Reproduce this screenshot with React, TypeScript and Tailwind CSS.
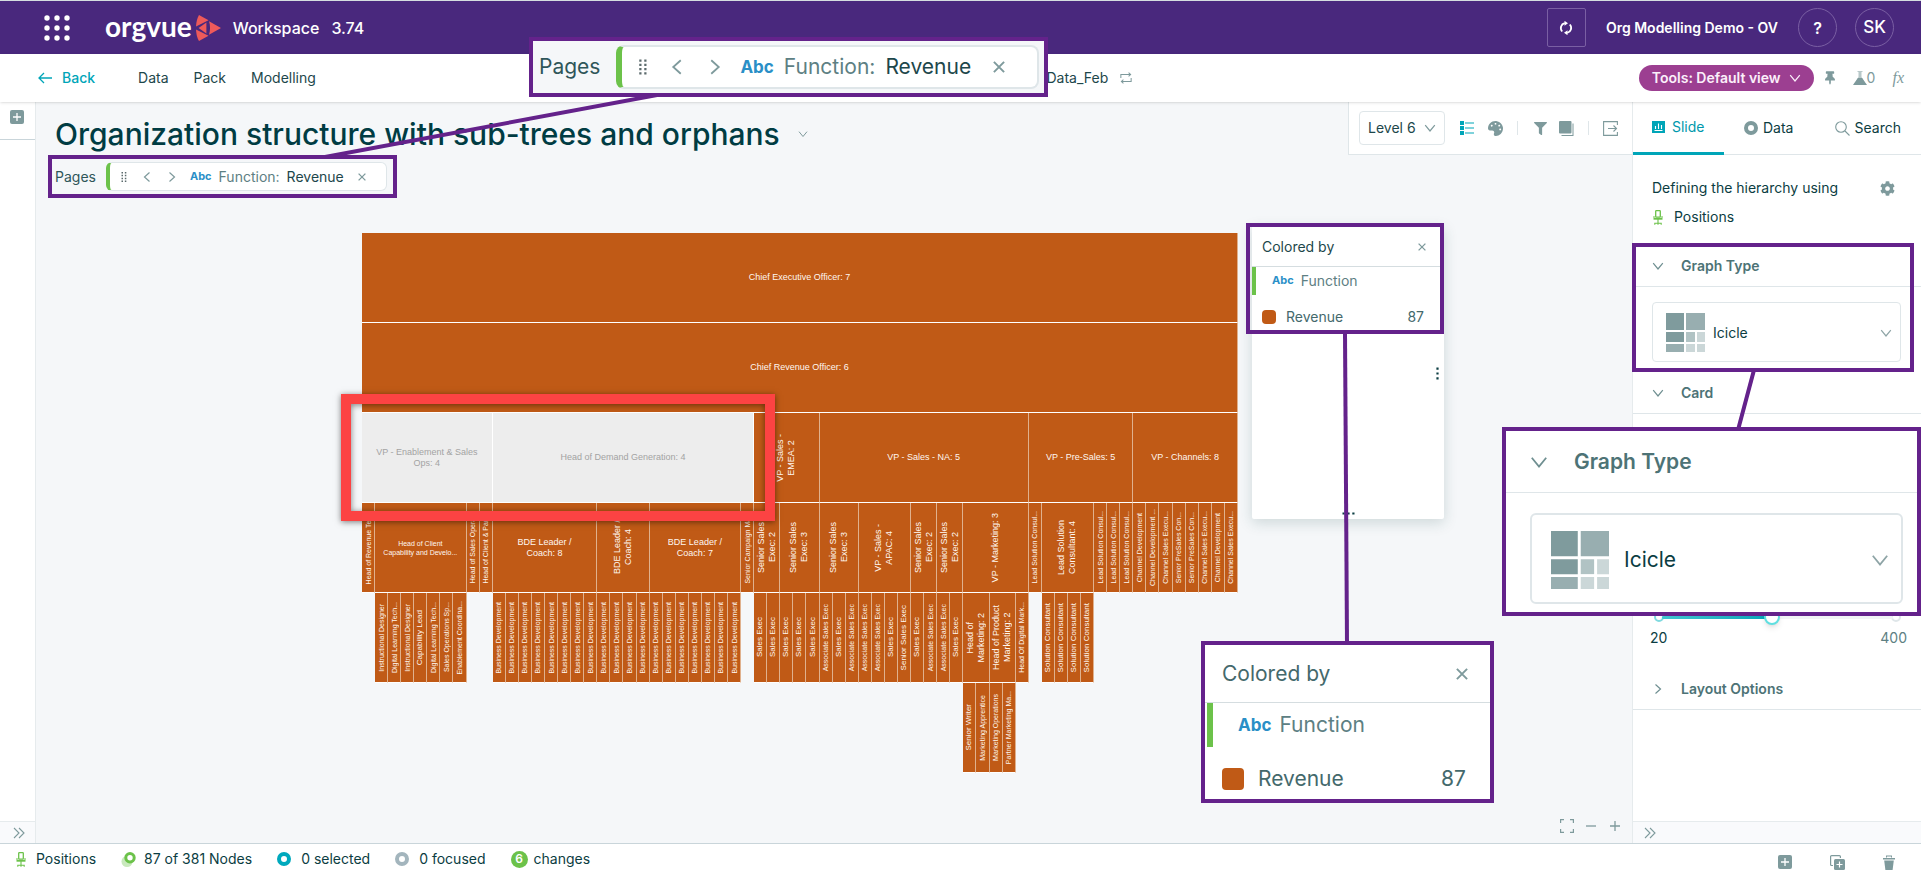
import type { ReactNode } from "react";
import clsx from "clsx";
import { FaCog, FaFilter, FaPalette, FaThumbtack } from "react-icons/fa";

type Size = "sm" | "lg";

type TreeNode = {
  label: string;
  // text class for the label, small cells use a smaller font
  text?: "xs" | "sm" | "md";
  vertical?: boolean;
  muted?: boolean;
  children?: TreeNode[];
};

const leaf = (label: string, text: TreeNode["text"] = "xs"): TreeNode => ({
  label,
  text,
  vertical: true,
});

const business = (count: number) =>
  Array.from({ length: count }, () => leaf("Business Development"));

const salesExec = leaf("Sales Exec", "sm");
const associate = leaf("Associate Sales Exec");

const tree: TreeNode = {
  label: "Chief Executive Officer: 7",
  children: [
    {
      label: "Chief Revenue Officer: 6",
      children: [
        {
          label: "VP - Enablement & Sales\nOps: 4",
          muted: true,
          children: [
            leaf("Head of Revenue Tea..."),
            {
              label: "Head of Client\nCapability and Develo...",
              text: "xs",
              children: [
                leaf("Instructional Designer"),
                leaf("Digital Learning Tech..."),
                leaf("Instructional Designer"),
                leaf("Capability Lead", "sm"),
                leaf("Digital Learning Tech..."),
                leaf("Sales Operations Sp..."),
                leaf("Enablement Coordina..."),
              ],
            },
            leaf("Head of Sales Opera..."),
            leaf("Head of Client & Part..."),
          ],
        },
        {
          label: "Head of Demand Generation: 4",
          muted: true,
          children: [
            { label: "BDE Leader /\nCoach: 8", children: business(8) },
            {
              label: "BDE Leader /\nCoach: 4",
              vertical: true,
              children: business(4),
            },
            { label: "BDE Leader /\nCoach: 7", children: business(7) },
            leaf("Senior Campaign Ma..."),
          ],
        },
        {
          label: "VP - Sales -\nEMEA: 2",
          vertical: true,
          children: [
            {
              label: "Senior Sales\nExec: 2",
              vertical: true,
              children: [salesExec, salesExec],
            },
            {
              label: "Senior Sales\nExec: 3",
              vertical: true,
              children: [salesExec, salesExec, salesExec],
            },
          ],
        },
        {
          label: "VP - Sales - NA: 5",
          children: [
            {
              label: "Senior Sales\nExec: 3",
              vertical: true,
              children: [associate, salesExec, associate],
            },
            {
              label: "VP - Sales -\nAPAC: 4",
              vertical: true,
              children: [
                associate,
                associate,
                salesExec,
                leaf("Senior Sales Exec", "sm"),
              ],
            },
            {
              label: "Senior Sales\nExec: 2",
              vertical: true,
              children: [salesExec, associate],
            },
            {
              label: "Senior Sales\nExec: 2",
              vertical: true,
              children: [associate, salesExec],
            },
            {
              label: "VP - Marketing: 3",
              vertical: true,
              children: [
                {
                  label: "Head of\nMarketing: 2",
                  vertical: true,
                  children: [
                    leaf("Senior Writer", "sm"),
                    leaf("Marketing Apprentice"),
                  ],
                },
                {
                  label: "Head of Product\nMarketing: 2",
                  vertical: true,
                  children: [
                    leaf("Marketing Operations"),
                    leaf("Partner Marketing Ma..."),
                  ],
                },
                leaf("Head Of Digital Mark..."),
              ],
            },
          ],
        },
        {
          label: "VP - Pre-Sales: 5",
          children: [
            leaf("Lead Solution Consul..."),
            {
              label: "Lead Solution\nConsultant: 4",
              vertical: true,
              children: Array.from({ length: 4 }, () =>
                leaf("Solution Consultant", "sm")
              ),
            },
            leaf("Lead Solution Consul..."),
            leaf("Lead Solution Consul..."),
            leaf("Lead Solution Consul..."),
          ],
        },
        {
          label: "VP - Channels: 8",
          children: [
            leaf("Channel Development"),
            leaf("Channel Development ..."),
            leaf("Channel Sales Execu..."),
            leaf("Senior PreSales Con..."),
            leaf("Senior PreSales Con..."),
            leaf("Channel Sales Execu..."),
            leaf("Channel Development"),
            leaf("Channel Sales Execu..."),
          ],
        },
      ],
    },
  ],
};

const countLeaves = (node: TreeNode): number =>
  node.children
    ? node.children.reduce((sum, child) => sum + countLeaves(child), 0)
    : 1;

function IcicleNode({ node, share }: { node: TreeNode; share: number }) {
  const total = countLeaves(node);
  const text = node.text ?? "md";
  return (
    <div className="min-w-0" style={{ width: `${share * 100}%` }}>
      <div
        className={clsx(
          "flex h-[90px] items-center justify-center overflow-hidden border-r border-b border-white text-center",
          node.muted
            ? "bg-[#ededed] text-[#a3a3a3]"
            : "border-r-[#e0b18d] bg-[#c05a16] text-[#fff7f0]"
        )}
      >
        <span
          className={clsx(
            "whitespace-pre",
            text === "xs" && "text-[7px] leading-[9px]",
            text === "sm" && "text-[8px] leading-[10px]",
            text === "md" && "text-[9px] leading-[11px]",
            node.vertical && "rotate-180 [writing-mode:vertical-rl]"
          )}
        >
          {node.label}
        </span>
      </div>
      {node.children && (
        <div className="flex items-start">
          {node.children.map((child, i) => (
            <IcicleNode key={i} node={child} share={countLeaves(child) / total} />
          ))}
        </div>
      )}
    </div>
  );
}

function Chevron({
  dir = "down",
  className = "size-3",
}: {
  dir?: "down" | "left" | "right";
  className?: string;
}) {
  return (
    <svg
      viewBox="0 0 12 12"
      fill="none"
      stroke="currentColor"
      strokeWidth="1.2"
      className={clsx("shrink-0", className)}
      aria-hidden="true"
    >
      {dir === "down" && <path d="M1.2 3.2 6 9l4.8-5.8" />}
      {dir === "left" && <path d="M8.5 1.5 3.5 6l5 4.5" />}
      {dir === "right" && <path d="M3.5 1.5 8.5 6l-5 4.5" />}
    </svg>
  );
}

function Cross({ className = "size-2" }: { className?: string }) {
  return (
    <svg
      viewBox="0 0 8 8"
      fill="none"
      stroke="currentColor"
      strokeWidth="1.3"
      className={clsx("shrink-0", className)}
      aria-hidden="true"
    >
      <path d="m.6.6 6.800 6.800M7.400.6.6 7.400" />
    </svg>
  );
}

function DoubleChevron() {
  return (
    <svg viewBox="0 0 12 12" fill="none" stroke="currentColor" strokeWidth="1.1" className="size-3" aria-hidden="true">
      <path d="m1 1 5 5-5 5M6 1l5 5-5 5" />
    </svg>
  );
}

function PlusSquare() {
  return (
    <svg viewBox="0 0 14 14" className="size-3.5" aria-hidden="true">
      <rect width="14" height="14" rx="2" fill="#7e9a9c" />
      <path d="M7 3v8M3 7h8" stroke="#fff" strokeWidth="1.3" />
    </svg>
  );
}

function Chair() {
  return (
    <svg viewBox="0 0 10 15" className="h-[15px] w-2.5 shrink-0" fill="none" stroke="#6cc24a" aria-hidden="true">
      <rect x="2.7" y=".7" width="4.600" height="6.400" rx=".6" strokeWidth="1.3" />
      <path d="M1 6v2M9 6v2" strokeWidth="1" />
      <path d="M.5 8.800h9" strokeWidth="1.800" />
      <path d="M5 9v5.800M1.800 14.800v-1.600h6.400v1.600" strokeWidth="1.1" />
    </svg>
  );
}

function IcicleIcon({ className }: { className: string }) {
  return (
    <svg viewBox="0 0 39 39" className={clsx("shrink-0", className)} aria-hidden="true">
      <path d="M0 0h18v17H0zM0 19h18v10H0z" fill="#7f9b9d" />
      <path d="M20 0h19v17H20zM0 31h18v8H0z" fill="#98aeb0" />
      <path d="M20 19h9v10h-9z" fill="#b1c3c4" />
      <path d="M31 19h8v10h-8zM20 31h9v8h-9zM31 31h8v8h-8z" fill="#cbd7d8" />
    </svg>
  );
}

function Abc({ size }: { size: Size }) {
  return (
    <span
      className={clsx(
        "font-bold text-[#2a8fc7]",
        size === "lg" ? "text-[17px]" : "text-[11px]"
      )}
    >
      Abc
    </span>
  );
}

function PagesBar({ size = "sm" }: { size?: Size }) {
  const lg = size === "lg";
  const chevron = lg ? "size-[18px]" : "size-3";
  return (
    <div
      className={clsx(
        "flex items-center text-[#2f5659]",
        lg ? "gap-4 text-[21px] leading-7" : "gap-2.5 text-sm"
      )}
    >
      <span>Pages</span>
      <div
        className={clsx(
          "flex items-center border-[#dfe6e9] border-l-[#6cc24a] bg-white",
          lg
            ? "h-11 w-[423px] rounded-lg border-2 border-l-6 pl-4"
            : "h-[29px] w-[281px] rounded-md border border-l-4 pl-2.5"
        )}
      >
        <svg
          viewBox="0 0 8 12"
          fill="#5c6b6d"
          className={lg ? "h-4 w-2.5" : "h-2.5 w-2"}
          aria-hidden="true"
        >
          {[0, 3.4, 6.8, 10.2].map((y) => (
            <path key={y} d={`M1 ${y}h1.800v1.800H1zM5 ${y}h1.800v1.800H5z`} />
          ))}
        </svg>
        <button
          type="button"
          aria-label="Previous page"
          className={clsx("text-[#7e9a9c]", lg ? "ml-5" : "ml-[13px]")}
        >
          <Chevron dir="left" className={chevron} />
        </button>
        <button
          type="button"
          aria-label="Next page"
          className={clsx("text-[#7e9a9c]", lg ? "ml-5" : "ml-[13px]")}
        >
          <Chevron dir="right" className={chevron} />
        </button>
        <span
          className={clsx(
            "ml-3 flex items-center",
            lg ? "pl-1 gap-2.5" : "gap-[7px]"
          )}
        >
          <Abc size={size} />
          <span className="text-[#5d8083]">Function:</span>
          <span className="text-[#1d474b]">Revenue</span>
        </span>
        <button
          type="button"
          aria-label="Remove page"
          className={clsx("text-[#7e9a9c]", lg ? "ml-[22px]" : "ml-3.5")}
        >
          <Cross className={lg ? "size-3" : "size-2"} />
        </button>
      </div>
    </div>
  );
}

function ColorLegend({ size = "sm" }: { size?: Size }) {
  const lg = size === "lg";
  return (
    <div
      className={clsx("text-[#44696c]", lg ? "text-[21px] leading-7" : "text-sm")}
    >
      <div
        className={clsx(
          "flex items-center justify-between border-b border-[#d5dde0]",
          lg ? "h-[58px] pr-[22px] pl-[17px]" : "h-10 pr-[18px] pl-2.5"
        )}
      >
        <span className={lg ? "" : "text-[#1d474b]"}>Colored by</span>
        <button type="button" aria-label="Close legend" className="text-[#7e9a9c]">
          <Cross className={lg ? "size-3" : "size-2"} />
        </button>
      </div>
      <div
        className={clsx(
          "flex items-center border-[#6cc24a]",
          lg ? "ml-0.5 h-11 gap-2 border-l-6 pl-[25px]" : "h-7 gap-[7px] border-l-4 pl-4"
        )}
      >
        <Abc size={size} />
        <span className="text-[#5d8083]">Function</span>
      </div>
      <div
        className={clsx(
          "flex items-center",
          lg ? "h-[63px] gap-3.5 pr-6 pl-[17px]" : "h-[43px] gap-2.5 pr-5 pl-2.5"
        )}
      >
        <span
          className={clsx("rounded-sm bg-[#c05a16]", lg ? "size-[22px]" : "size-3.5")}
        />
        <span>Revenue</span>
        <span className="ml-auto">87</span>
      </div>
    </div>
  );
}

function SectionHeader({
  title,
  open = true,
  size = "sm",
}: {
  title: string;
  open?: boolean;
  size?: Size;
}) {
  const lg = size === "lg";
  return (
    <button
      type="button"
      aria-expanded={open}
      className={clsx(
        "flex w-full items-center border-b border-[#dfe6e9] text-left font-semibold text-[#4d7376]",
        lg
          ? "h-[62px] gap-[26px] pl-6 text-[21px] leading-7"
          : "h-[42px] gap-[17px] pl-[19px] text-sm"
      )}
    >
      <Chevron
        dir={open ? "down" : "right"}
        className={clsx("text-[#6f8f91]", lg ? "size-[18px]" : "size-3")}
      />
      {title}
    </button>
  );
}

function GraphSelect({ size = "sm" }: { size?: Size }) {
  const lg = size === "lg";
  return (
    <div
      className={clsx(
        "flex items-center border-[#dfe6e9] bg-white",
        lg
          ? "mt-5 mr-3.5 ml-6 h-[91px] gap-[15px] rounded-md border-2 pt-0.5 pr-3 pl-[19px]"
          : "mt-[15px] mr-5 ml-[19px] h-[60px] gap-2 rounded border pt-px pr-2 pl-[13px]"
      )}
    >
      <IcicleIcon className={lg ? "size-[58px]" : "size-[39px]"} />
      <select
        aria-label="Graph type"
        className={clsx(
          "min-w-0 flex-1 appearance-none bg-transparent text-[#0b3d42]",
          lg ? "text-[21px] leading-7" : "text-sm"
        )}
      >
        <option>Icicle</option>
      </select>
      <Chevron className={clsx("text-[#8ea4a6]", lg ? "size-[18px]" : "size-3")} />
    </div>
  );
}

function Ring({ className }: { className: string }) {
  return <span className={clsx("size-3.5 rounded-full border-4", className)} />;
}

function TopBar() {
  return (
    <header className="flex h-[54px] items-center border-t border-[#d5dde0] bg-[#49287d] pr-[27px] pl-11 text-white">
      <button type="button" aria-label="Apps">
        <svg viewBox="0 0 26 26" className="size-[26px]" fill="#fff" aria-hidden="true">
          {[3, 13, 23].map((y) =>
            [3, 13, 23].map((x) => <circle key={`${x}-${y}`} cx={x} cy={y} r="2.7" />)
          )}
        </svg>
      </button>
      <a href="#" className="ml-[35px] flex items-center gap-1">
        <span className="-mt-1 font-['Lato'] text-[28px] leading-8 font-bold">orgvue</span>
        <svg viewBox="0 0 25 26" className="h-[26px] w-[25px]" fill="#ee5a5a" aria-hidden="true">
          <path d="M3 0 12.5 5.2 0 11.600C.2 7 1.200 3 3 0z" />
          <path d="M3 26 12.5 20.800 0 14.400C.2 19 1.200 23 3 26z" />
          <path d="M2.600 13 10.400 7.400v11.200z" />
          <path d="M13 6.300 25 13l-12 6.700c1.400-4.300 1.400-9.200 0-13.400z" />
        </svg>
      </a>
      <span className="ml-3 text-base font-medium">Workspace</span>
      <span className="ml-3 text-base font-medium">3.74</span>
      <button
        type="button"
        aria-label="Refresh"
        className="ml-auto flex size-[39px] items-center justify-center rounded-xs border border-[#7a5fa3]"
      >
        <svg viewBox="0 0 14 14" className="size-3.5" fill="none" stroke="#fff" strokeWidth="1.8" aria-hidden="true">
          <path d="M5.800 2.200A5 5 0 0 0 3.200 10.500M8.200 11.800A5 5 0 0 0 10.800 3.500" />
          <path d="M5.500-.2 9 2.300 5.500 4.800zM8.500 9.200 5 11.700l3.500 2.500z" fill="#fff" stroke="none" />
        </svg>
      </button>
      <span className="ml-5 text-sm font-semibold">Org Modelling Demo - OV</span>
      <button
        type="button"
        aria-label="Help"
        className="ml-5 size-[39px] rounded-full border border-[#7a5fa3] text-base font-semibold"
      >
        ?
      </button>
      <button
        type="button"
        className="ml-[18px] size-[39px] rounded-full border border-[#7a5fa3] text-[17px] font-medium"
      >
        SK
      </button>
    </header>
  );
}

function NavBar() {
  return (
    <nav className="relative z-10 flex h-12 items-center bg-white pr-[17px] pl-[38px] text-sm text-[#1d474b] shadow-sm">
      <a href="#" className="flex items-center gap-2.5 font-medium text-[#00a5b8]">
        <svg viewBox="0 0 14 12" className="h-3 w-3.5" fill="none" stroke="currentColor" strokeWidth="1.3" aria-hidden="true">
          <path d="M14 6H1M6 1 1 6l5 5" />
        </svg>
        Back
      </a>
      <div className="ml-[43px] flex gap-[25px]">
        <a href="#">Data</a>
        <a href="#">Pack</a>
        <a href="#">Modelling</a>
      </div>
      <div className="flex flex-1 items-center justify-center gap-3 pl-56">
        <span>Data_Feb</span>
        <svg viewBox="0 0 14 14" className="size-3" fill="none" stroke="#7e9a9c" strokeWidth="1.2" aria-hidden="true">
          <path d="M1 7V3h11M10 .8 12.400 3 10 5.200M13 7v4H2M4 8.800 1.600 11 4 13.200" />
        </svg>
      </div>
      <button
        type="button"
        className="flex h-[26px] items-center gap-2 rounded-full bg-[#9c3f91] px-[13px] font-semibold text-[#fbeffa]"
      >
        Tools: Default view
        <Chevron className="size-3" />
      </button>
      <button type="button" aria-label="Pin" className="ml-[11px] text-[#7e9a9c]">
        <FaThumbtack className="h-3.5 w-2.5" />
      </button>
      <span className="ml-[18px] flex items-center text-[#7e9a9c]">
        <svg viewBox="0 0 14 14" className="size-3.5" fill="currentColor" aria-hidden="true">
          <path d="M4.500 0h5v1h-1v5L13 13.200V14H1v-.800L5.500 6V1h-1z" opacity=".55" />
          <path d="M4.900 7h4.200L14 14H0z" />
        </svg>
        0
      </span>
      <button type="button" className="ml-[17px] font-['Liberation_Serif',serif] text-base leading-5 text-[#7e9a9c] italic">
        fx
      </button>
    </nav>
  );
}

function Toolbar() {
  return (
    <div className="flex h-[53px] w-[284px] shrink-0 items-center border-b border-l border-[#dfe6e9] bg-white pl-2.5 text-[#7e9a9c]">
      <div className="relative flex h-[34px] w-[86px] items-center rounded border border-[#dfe6e9]">
        <select
          aria-label="Level"
          className="w-full appearance-none bg-transparent pl-2 text-sm text-[#1d474b]"
        >
          <option>Level 6</option>
        </select>
        <Chevron className="pointer-events-none absolute right-2 size-3" />
      </div>
      <button type="button" aria-label="Legend" className="ml-[15px]">
        <svg viewBox="0 0 14 14" className="size-3.5" fill="#00a5b8" aria-hidden="true">
          <path d="M0 0h4v4H0zM0 5h4v4H0zM0 10h4v4H0zM5 1.500h9v1H5zM5 6.500h9v1H5zM5 11.500h9v1H5z" />
        </svg>
      </button>
      <button type="button" aria-label="Colors" className="ml-3.5">
        <FaPalette className="size-[15px] -scale-x-100" />
      </button>
      <span className="ml-3.5 h-3.5 w-px bg-[#dfe6e9]" />
      <button type="button" aria-label="Filter" className="ml-4">
        <FaFilter className="size-[13px]" />
      </button>
      <button type="button" aria-label="Layers" className="ml-3">
        <svg viewBox="0 0 15 15" className="size-[15px]" fill="currentColor" aria-hidden="true">
          <rect width="12.500" height="12.500" rx="1" />
          <path d="M13.500 2.500h1V15h-12v-1h11z" />
        </svg>
      </button>
      <span className="ml-3.5 h-3.5 w-px bg-[#dfe6e9]" />
      <button type="button" aria-label="Export" className="ml-3.5">
        <svg viewBox="0 0 15 15" className="size-[15px]" fill="none" stroke="currentColor" strokeWidth="1.1" aria-hidden="true">
          <path d="M14.400 4V.600H.600v13.800h13.800V11M5 7.500h8.500M10.500 4.500l3 3-3 3" />
        </svg>
      </button>
    </div>
  );
}

function SidePanel() {
  return (
    <aside className="flex w-[289px] shrink-0 flex-col border-l border-[#e6ebed] bg-white text-sm text-[#0b3d42]">
      <div className="flex h-[53px] items-stretch border-b border-[#dfe6e9]">
        <button
          type="button"
          className="-mb-px flex w-[91px] items-center gap-[7px] border-b-3 border-[#00a5b8] pl-[19px] text-[#0098ac]"
        >
          <svg viewBox="0 0 13 12" className="h-3 w-[13px]" aria-hidden="true">
            <path d="M0 0h13v12H0z" fill="#00a5b8" />
            <path d="M3.500 8V5M6.500 8V2.500M9.500 8V4M2.500 9.500h8" stroke="#fff" strokeWidth="1.1" />
          </svg>
          Slide
        </button>
        <button type="button" className="ml-5 flex items-center gap-[5px]">
          <Ring className="border-[#7e9a9c]" />
          Data
        </button>
        <button type="button" className="mr-5 ml-auto flex items-center gap-[5px]">
          <svg viewBox="0 0 15 15" className="size-[15px]" fill="none" stroke="#7e9a9c" strokeWidth="1.100" aria-hidden="true">
            <circle cx="6" cy="6" r="5.300" />
            <path d="m10 10 4.500 4.500" />
          </svg>
          Search
        </button>
      </div>
      <div className="flex items-center justify-between pt-[23px] pr-[26px] pl-[19px]">
        <span>Defining the hierarchy using</span>
        <button type="button" aria-label="Settings" className="text-[#7e9a9c]">
          <FaCog className="size-[15px]" />
        </button>
      </div>
      <div className="mt-[9px] mb-[18px] flex items-center gap-[11px] pl-5">
        <Chair />
        Positions
      </div>
      <SectionHeader title="Graph Type" />
      <GraphSelect />
      <div className="mt-2.5">
        <SectionHeader title="Card" />
      </div>
      <div className="mt-[198px] pr-3.5 pl-[17px]">
        <div className="relative mr-1.5 ml-1 flex items-center justify-between">
          <span className="size-2.5 rounded-full border-2 border-[#7fdadf] bg-white" />
          <span className="size-2.5 rounded-full border-2 border-[#dfe6e9] bg-white" />
          <input
            type="range"
            min={20}
            max={400}
            defaultValue={200}
            aria-label="Card width"
            className="absolute inset-x-2 h-[3px] appearance-none rounded bg-linear-to-r from-[#3fc6d0] from-0% via-[#00a5b8] via-47% to-[#f1f4f5] to-47% [&::-webkit-slider-thumb]:size-4 [&::-webkit-slider-thumb]:appearance-none [&::-webkit-slider-thumb]:rounded-full [&::-webkit-slider-thumb]:border-2 [&::-webkit-slider-thumb]:border-[#5fdfe0] [&::-webkit-slider-thumb]:bg-white [&::-webkit-slider-thumb]:shadow-md"
          />
        </div>
        <div className="mt-1.5 flex justify-between">
          <span>20</span>
          <span className="text-[#5d8083]">400</span>
        </div>
      </div>
      <div className="mt-5">
        <SectionHeader title="Layout Options" open={false} />
      </div>
      <div className="mt-auto flex h-[22px] items-center border-t border-[#e6ebed] bg-[#f9fafc] pl-[11px] text-[#7e9a9c]">
        <button type="button" aria-label="Collapse panel">
          <DoubleChevron />
        </button>
      </div>
    </aside>
  );
}

function Canvas() {
  return (
    <main className="relative flex min-w-0 flex-1 flex-col bg-[#f5f7f9]">
      <div className="flex items-start justify-between">
        <div className="flex items-center gap-[18px] pt-3 pl-[19px]">
          <h1 className="text-[30px] leading-10 font-medium whitespace-nowrap text-[#003c43]">
            Organization structure with sub-trees and orphans
          </h1>
          <button type="button" aria-label="Slide menu" className="text-[#7e9a9c]">
            <Chevron className="size-2.5" />
          </button>
        </div>
        <Toolbar />
      </div>
      <div className="mt-[7px] pl-[19px]">
        <PagesBar />
      </div>

      <div className="relative mt-[42px] mr-[394px] ml-[326px] font-['Liberation_Sans',sans-serif]">
        <IcicleNode node={tree} share={1} />
        <div className="absolute top-[161px] -left-[21px] h-[127px] w-[49.6%] border-10 border-[#fc4343] shadow-[0_1px_6px_rgba(0,0,0,0.5),inset_0_1px_6px_rgba(0,0,0,0.5)]" />
      </div>

      <div className="absolute top-[123px] right-[188px] h-[294px] w-48 rounded-xs bg-white pt-0.5 shadow-[0_4px_14px_rgba(30,80,80,0.18)]">
        <ColorLegend />
        <svg viewBox="0 0 3 13" className="absolute top-[142px] right-[5px] h-[13px] w-[3px]" fill="#0b3d42" aria-hidden="true">
          <path d="M.400.500h2.200v2.200H.400zM.400 5.400h2.200v2.200H.400zM.400 10.300h2.200v2.200H.400z" />
        </svg>
        <svg viewBox="0 0 13 3" className="absolute bottom-1 left-[90px] h-[3px] w-[13px]" fill="#0b3d42" aria-hidden="true">
          <path d="M.500.400h2.200v2.200H.500zM5.400.400h2.200v2.200H5.400zM10.300.400h2.200v2.200h-2.200z" />
        </svg>
      </div>

      <div className="mt-auto flex items-center justify-end gap-3 pr-3 pb-2.5 text-[#7e9a9c]">
        <button type="button" aria-label="Fit to screen">
          <svg viewBox="0 0 14 14" className="size-3.5" fill="none" stroke="currentColor" strokeWidth="1.200" aria-hidden="true">
            <path d="M.600 4V.600H4M10 .600h3.400V4M13.400 10v3.400H10M4 13.400H.600V10" />
          </svg>
        </button>
        <button type="button" aria-label="Zoom out">
          <svg viewBox="0 0 10 10" className="size-2.5" stroke="currentColor" strokeWidth="1.300" aria-hidden="true">
            <path d="M0 5h10" />
          </svg>
        </button>
        <button type="button" aria-label="Zoom in" className="ml-0.5">
          <svg viewBox="0 0 10 10" className="size-2.5" stroke="currentColor" strokeWidth="1.300" aria-hidden="true">
            <path d="M0 5h10M5 0v10" />
          </svg>
        </button>
      </div>
    </main>
  );
}

function StatusBar() {
  return (
    <footer className="flex h-[35px] items-center border-t border-[#c9d5da] bg-white pr-[26px] pb-1 pl-4 text-sm text-[#0b3d42]">
      <div className="flex items-center gap-[25px]">
        <span className="flex items-center gap-2.5">
          <Chair />
          Positions
        </span>
        <span className="flex items-center gap-2">
          <svg viewBox="0 0 15 15" className="size-[15px]" fill="none" aria-hidden="true">
            <circle cx="6" cy="9.500" r="5.500" fill="#c9e9bd" />
            <circle cx="9" cy="5.800" r="4.200" fill="#fff" stroke="#6cc24a" strokeWidth="3" />
          </svg>
          87 of 381 Nodes
        </span>
        <span className="flex items-center gap-2.5">
          <Ring className="border-[#00a9bd]" />0 selected
        </span>
        <span className="flex items-center gap-2.5">
          <Ring className="border-[#a3b5bd]" />0 focused
        </span>
        <span className="flex items-center gap-1.5">
          <span className="flex size-[17px] items-center justify-center rounded-full bg-[#6cc24a] text-xs font-semibold text-white">
            6
          </span>
          changes
        </span>
      </div>
      <div className="ml-auto flex items-center gap-[38px] pt-1.5">
        <button type="button" aria-label="Add">
          <PlusSquare />
        </button>
        <button type="button" aria-label="Duplicate">
          <svg viewBox="0 0 15 15" className="size-[15px]" fill="none" aria-hidden="true">
            <path d="M3 10.500H1.600a1 1 0 0 1-1-1V1.600a1 1 0 0 1 1-1h7.800a1 1 0 0 1 1 1V3" stroke="#7e9a9c" strokeWidth="1.200" />
            <rect x="4" y="4" width="11" height="11" rx="1.500" fill="#7e9a9c" />
            <path d="M9.500 6.500v6M6.500 9.500h6" stroke="#fff" strokeWidth="1.200" />
          </svg>
        </button>
        <button type="button" aria-label="Delete">
          <svg viewBox="0 0 12 15" className="h-[15px] w-3" fill="#7e9a9c" aria-hidden="true">
            <path d="M3 2.500V.500h6v2H8v-1H4v1zM0 3h12v1.600H0zM1.200 5.600h9.600L9.600 15H2.400z" />
          </svg>
        </button>
      </div>
    </footer>
  );
}

function Callout({ className, children }: { className: string; children?: ReactNode }) {
  return (
    <div className={clsx("absolute border-4 border-[#64228b]", className)}>{children}</div>
  );
}

// Highlight frames, their enlarged copies and the lines that join them
function Annotations() {
  return (
    <div className="pointer-events-none absolute inset-0 z-20">
      <svg viewBox="0 0 340 64" className="absolute top-[94px] left-[322px] h-16 w-[340px]" aria-hidden="true">
        <path d="M3 63 335 1" stroke="#64228b" strokeWidth="4" />
      </svg>
      <Callout className="top-[155px] left-12 h-[43px] w-[349px]" />
      <Callout className="top-[37px] left-[529px] flex h-[60px] w-[519px] items-center bg-[#f5f7f9] pl-1.5">
        <PagesBar size="lg" />
      </Callout>

      <svg viewBox="0 0 8 308" className="absolute top-[334px] right-[571px] h-[308px] w-2" aria-hidden="true">
        <path d="m3 0 2 308" stroke="#64228b" strokeWidth="4" />
      </svg>
      <Callout className="top-[223px] right-[477px] h-[111px] w-[198px]" />
      <Callout className="top-[641px] right-[427px] h-[162px] w-[293px] bg-white">
        <ColorLegend size="lg" />
      </Callout>

      <svg viewBox="0 0 24 60" className="absolute top-[370px] right-[163px] h-[60px] w-6" aria-hidden="true">
        <path d="M20 0 4 60" stroke="#64228b" strokeWidth="4" />
      </svg>
      <Callout className="top-[243px] right-[7px] h-[129px] w-[282px]" />
      <Callout className="top-[427px] right-0 h-[189px] w-[419px] bg-white">
        <SectionHeader title="Graph Type" size="lg" />
        <GraphSelect size="lg" />
      </Callout>
    </div>
  );
}

export default function App() {
  return (
    <div className="relative flex min-h-screen flex-col overflow-hidden font-['Inter',sans-serif]">
      <TopBar />
      <NavBar />
      <div className="flex flex-1">
        <aside className="flex w-9 shrink-0 flex-col border-r border-[#e6ebed] bg-white">
          <div className="flex h-[38px] items-center border-b border-[#c9d5da] pl-2.5">
            <button type="button" aria-label="Add slide" className="-mt-2">
              <PlusSquare />
            </button>
          </div>
          <div className="mt-auto flex h-[22px] items-center border-t border-[#e6ebed] bg-[#f9fafc] pl-[13px] text-[#7e9a9c]">
            <button type="button" aria-label="Expand slides">
              <DoubleChevron />
            </button>
          </div>
        </aside>
        <Canvas />
        <SidePanel />
      </div>
      <StatusBar />
      <Annotations />
    </div>
  );
}
